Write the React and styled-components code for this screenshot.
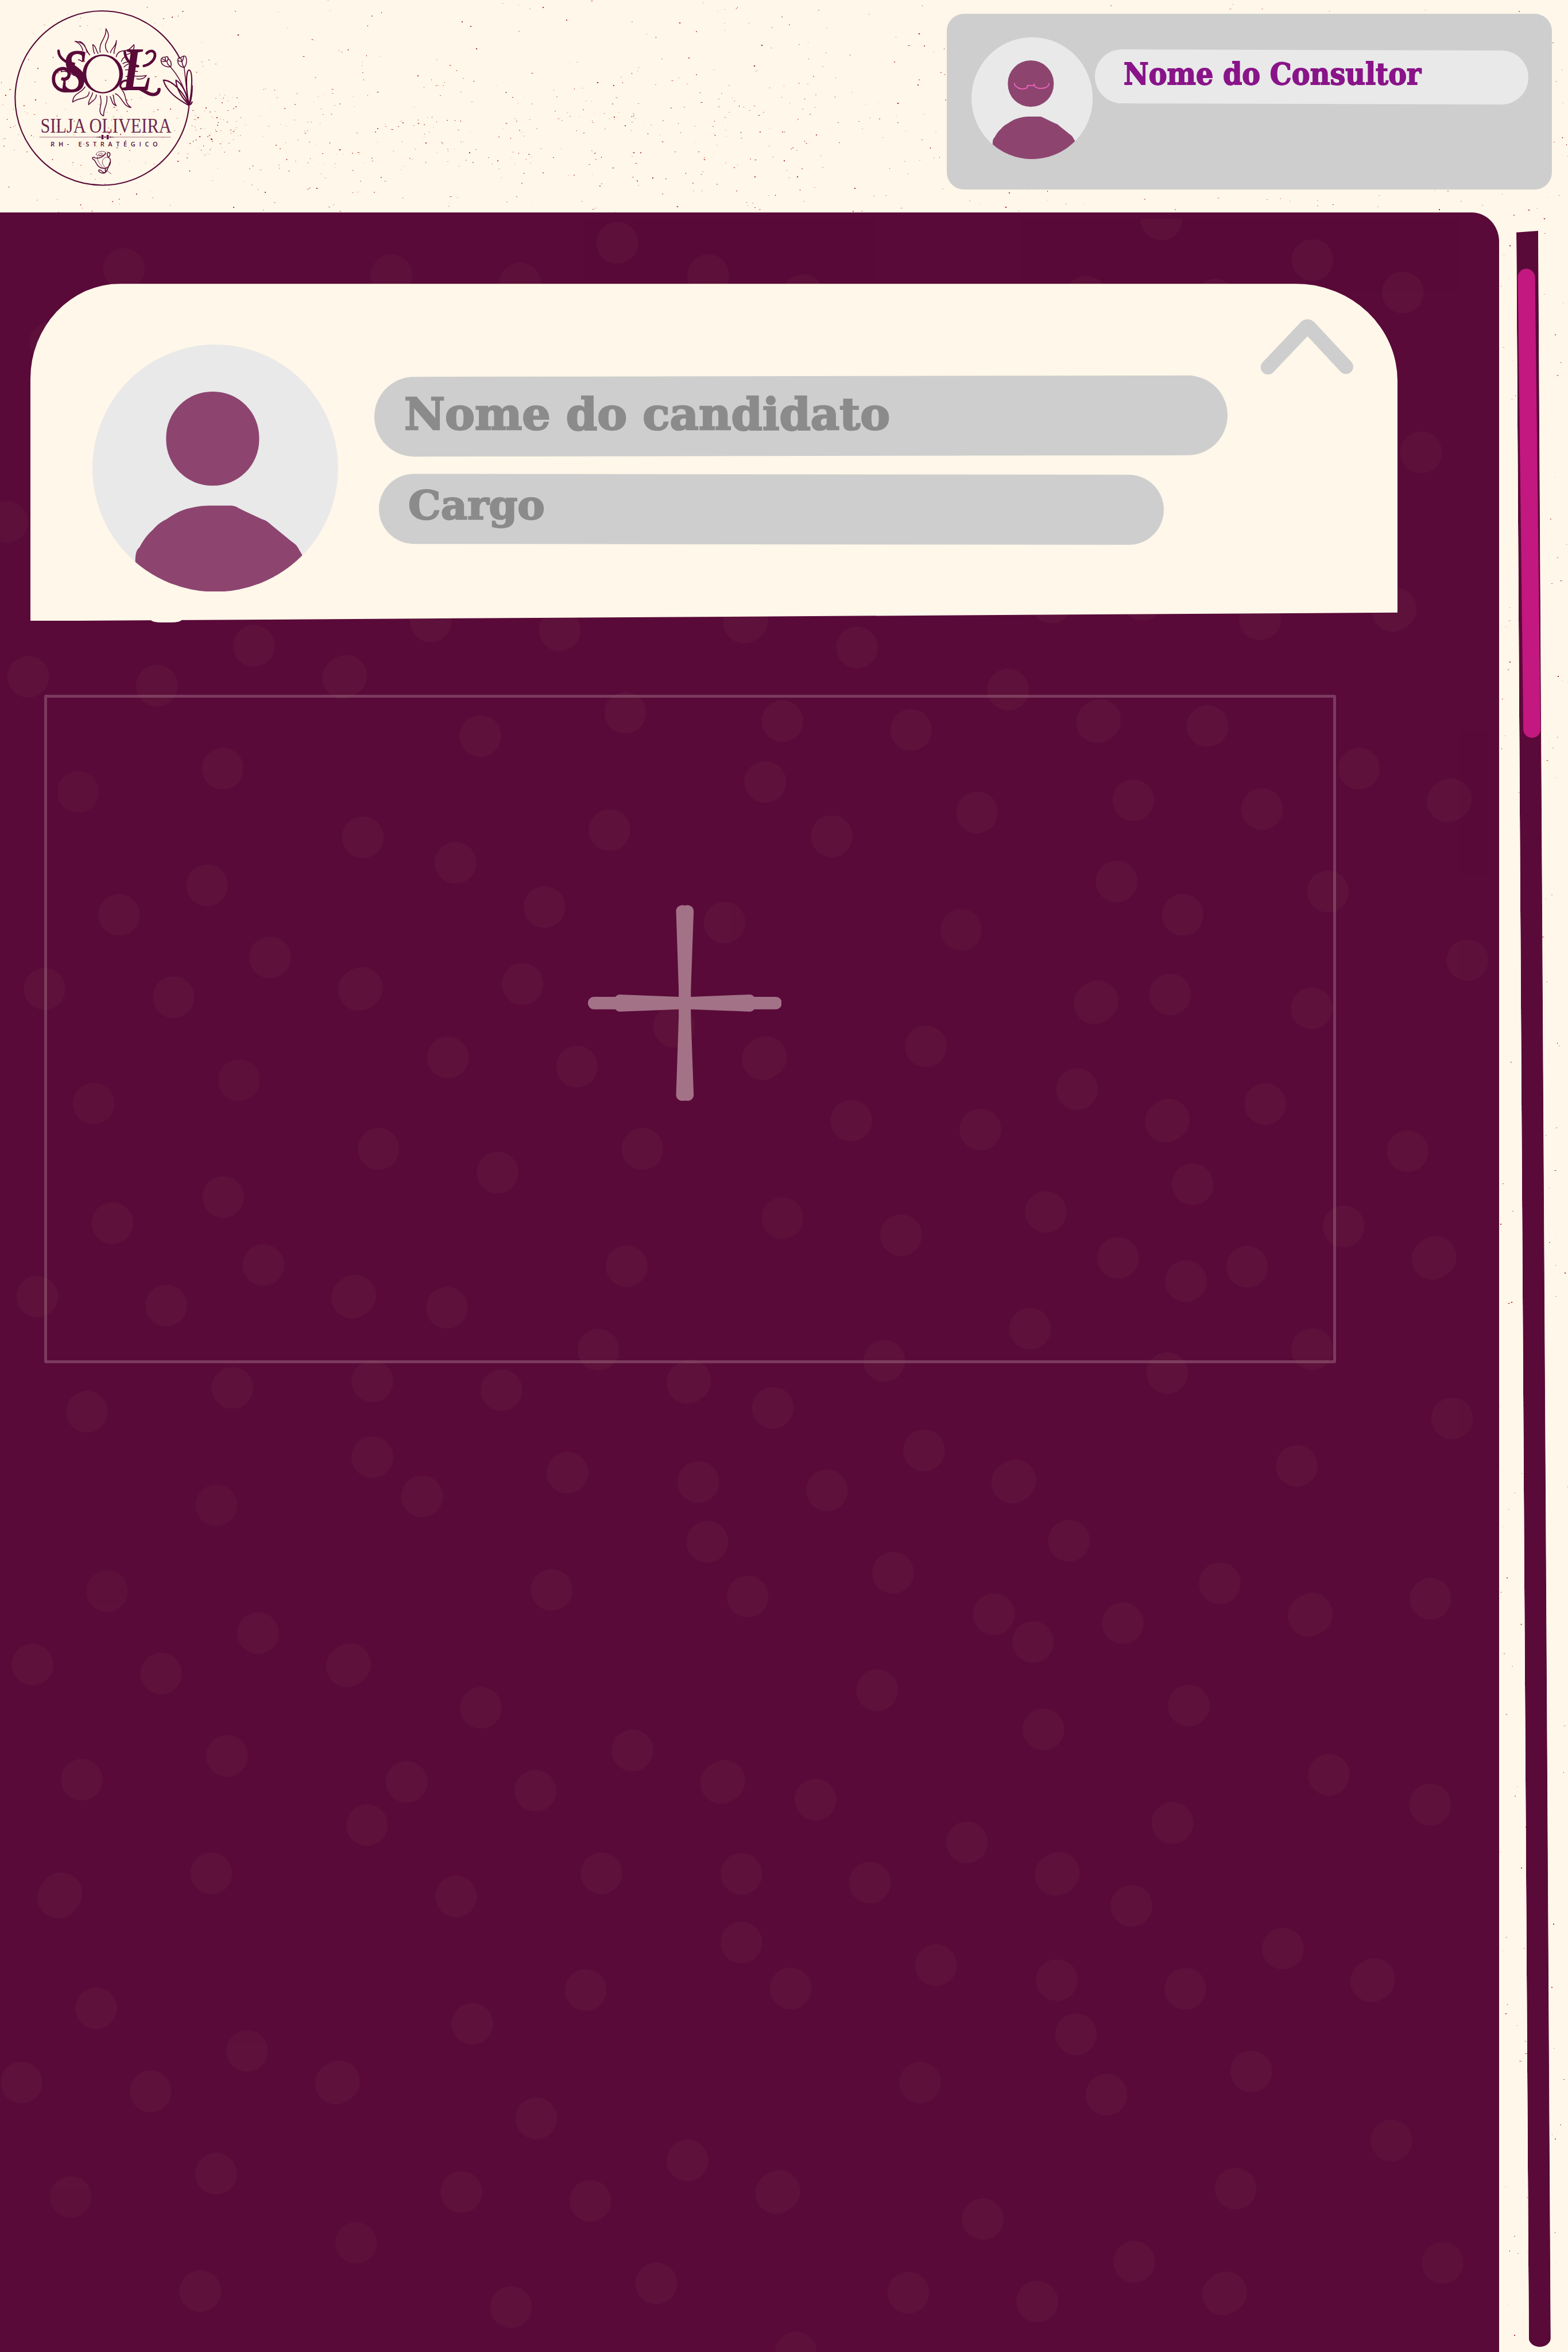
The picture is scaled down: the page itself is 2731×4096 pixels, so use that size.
import React from "react";
import styled, { createGlobalStyle } from "styled-components";

/* All measures are given on a 3000px wide artboard and scaled to the 2731px page. */
const K = 2731 / 3000;
const u = (n) => `${+(n * K).toFixed(3)}px`;

const color = {
  cream: "#fff7e9",
  wine: "#590a39",
  mauve: "#8d4570",
  grey: "#cecece",
  light: "#e9e9e9",
  textGrey: "#8b8b8b",
  purple: "#891489",
  pink: "#c3187f",
  plus: "#a37287",
  frame: "#7c3a5f",
};

const Global = createGlobalStyle`
  html, body { margin: 0; padding: 0; background: ${color.cream}; }
  *, *::before, *::after { box-sizing: border-box; }
`;

const Page = styled.div`
  position: relative;
  width: 2731px;
  height: 4096px;
  overflow: hidden;
  background: ${color.cream};
  display: flex;
  flex-direction: column;
`;

const SpeckleLayer = styled.svg`
  position: absolute;
  inset: 0;
  width: ${u(3000)};
  height: ${u(4500)};
`;

const Header = styled.header`
  position: relative;
  flex: none;
  height: ${u(406)};
  display: flex;
  justify-content: space-between;
  align-items: flex-start;
  padding-right: ${u(31)};
`;

const LogoMark = styled.svg`
  width: ${u(400)};
  height: ${u(400)};
`;

const ConsultantCard = styled.section`
  width: ${u(1158)};
  height: ${u(336)};
  margin-top: ${u(26)};
  padding: ${u(45)} ${u(45)} 0 ${u(48)};
  display: flex;
  align-items: flex-start;
  gap: ${u(4)};
  border-radius: ${u(33)};
  background: ${color.grey};
`;

const AvatarSvg = styled.svg`
  flex: none;
  display: block;
  width: ${(p) => u(p.$w)};
  height: ${(p) => u(p.$h)};
`;

const Pill = styled.div`
  width: ${(p) => u(p.$w)};
  height: ${(p) => u(p.$h)};
  margin: ${(p) => u(p.$top || 0)} 0 0 ${(p) => u(p.$left || 0)};
  padding: ${(p) => u(p.$padTop)} 0 0 ${(p) => u(p.$padLeft)};
  border-radius: ${(p) => u(p.$h / 2)};
  background: ${(p) => p.$bg};
  transform: rotate(${(p) => p.$tilt}deg);
`;

const Label = styled.span`
  display: block;
  width: max-content;
  font-family: "DejaVu Serif", serif;
  font-weight: 700;
  font-size: ${(p) => u(p.$size)};
  line-height: 1;
  white-space: nowrap;
  color: ${(p) => p.$color};
  -webkit-text-stroke: ${(p) => u(p.$size * 0.034)} ${(p) => p.$color};
  transform: rotate(${(p) => -p.$tilt}deg) scaleX(${(p) => p.$stretch});
  transform-origin: left center;
`;

const Body = styled.div`
  position: relative;
  flex: 1;
  min-height: 0;
  display: flex;
`;

const Board = styled.main`
  position: relative;
  flex: none;
  width: ${u(2868)};
  height: ${u(4094)};
  overflow: hidden;
  background: ${color.wine};
  border-top-right-radius: ${u(52)} ${u(56)};
  padding: ${u(137)} 0 0 ${u(58)};
  display: flex;
  flex-direction: column;
  align-items: flex-start;
`;

const DotLayer = styled.svg`
  position: absolute;
  left: 0;
  top: 0;
  z-index: 1;
  width: ${u(2868)};
  height: ${u(4094)};
`;

const ProfileWrap = styled.div`
  position: relative;
  z-index: 2;
  &::after {
    content: "";
    position: absolute;
    left: ${u(231)};
    bottom: ${u(-3)};
    width: ${u(58)};
    height: ${u(10)};
    border-radius: 0 0 ${u(20)} ${u(20)} / 0 0 ${u(5)} ${u(5)};
    background: ${color.cream};
  }
`;

const ProfileCard = styled.section`
  width: ${u(2616)};
  height: ${u(645)};
  padding: ${u(116)} ${u(84)} 0 ${u(119)};
  display: flex;
  align-items: flex-start;
  background: ${color.cream};
  border-radius: ${u(172)} ${u(195)} 0 0 / ${u(182)} ${u(186)} 0 0;
  clip-path: polygon(0 0, 100% 0, 100% 97.5%, 0 100%);
`;

const Fields = styled.div`
  flex: 1;
  display: flex;
  flex-direction: column;
  padding: ${u(60.5)} 0 0 ${u(69)};
`;

const ChevronButton = styled.svg`
  flex: none;
  width: ${u(180)};
  height: ${u(110)};
  margin-top: ${u(-50)};
`;

const DropArea = styled.section`
  width: ${u(2472)};
  height: ${u(1278)};
  margin: ${u(141.5)} 0 0 ${u(26.5)};
  border: 5.5px solid ${color.frame};
  outline: 0.5px solid ${color.frame};
  outline-offset: -5.5px;
  border-radius: ${u(3)};
  padding: ${u(396)} 0 0 ${u(1034.5)};
`;

const PlusIcon = styled.svg`
  display: block;
  width: ${u(371)};
  height: ${u(375)};
`;

const Rail = styled.aside`
  padding: ${u(36)} 0 0 ${u(33)};
`;

const Track = styled.div`
  width: ${u(42)};
  height: ${u(4048)};
  padding: ${u(73)} 0 0 ${u(2.6)};
  background: ${color.wine};
  border-radius: 0 0 ${u(21)} ${u(21)} / 0 0 ${u(17)} ${u(17)};
  clip-path: polygon(0 ${u(3)}, 100% 0, 100% 100%, 0 100%);
  transform: skewX(0.34deg);
  transform-origin: top left;
`;

const Thumb = styled.div`
  width: ${u(33.5)};
  height: ${u(898)};
  border-radius: ${u(17)};
  background: ${color.pink};
  transform: skewX(0.36deg);
  transform-origin: top left;
`;

/* ---------- paper speckles ---------- */

function makeSpeckles() {
  let seed = 90210;
  const rnd = () => {
    seed = (seed * 1664525 + 1013904223) % 4294967296;
    return seed / 4294967296;
  };
  const tones = ["#a81512", "#b8332c", "#c4574d", "#8e1418", "#c97a6f"];
  const out = [];
  const push = (x, y) => {
    const a = rnd();
    out.push({
      x: Math.round(x),
      y: Math.round(y),
      w: a > 0.5 ? 2 : 1,
      h: rnd() > 0.45 ? 2 : 1,
      cross: rnd() > 0.72,
      o: rnd() > 0.55 ? 0.85 : 0.15 + rnd() * 0.5,
      c: tones[Math.floor(rnd() * tones.length)],
    });
  };
  let left = 960;
  while (left > 0) {
    const x = rnd() * 2731;
    const y = rnd() * 372;
    const band = Math.exp(-Math.pow((y - 225) / 95, 2));
    const side = x < 1400 ? 1 : 0.6;
    if (rnd() < (0.22 + 0.78 * band) * side) {
      push(x, y);
      left -= 1;
    }
  }
  for (let i = 0; i < 60; i += 1) push(330 + rnd() * 90, 160 + rnd() * 110);
  for (let i = 0; i < 170; i += 1) push(2611 + rnd() * 120, 372 + rnd() * 3720);
  return out;
}

const SPECKLES = makeSpeckles();

const Speckles = () => (
  <SpeckleLayer viewBox={`0 0 ${3000 * K} ${4500 * K}`} shapeRendering="crispEdges">
    {SPECKLES.map((s, i) => (
      <g key={i} fill={s.c} opacity={s.o}>
        <rect x={s.x} y={s.y} width={s.w} height={s.h} />
        {s.cross && <rect x={s.x - 1} y={s.y} width={s.w + 2} height="1" opacity="0.5" />}
      </g>
    ))}
  </SpeckleLayer>
);

/* ---------- board dots: [x, y, wide?] in tile units ---------- */

const TILES = [
  {
    x: 0, y: 774,
    dots: [
      [59, 108], [328, 124], [531, 52], [721, 108, 1], [901, 8], [1171, 24], [1560, 8, 1], [1308, 173], [1005, 215],
      [466, 274], [163, 316], [759, 398], [953, 444], [1275, 385], [433, 485], [249, 538], [1139, 524], [1516, 552],
      [565, 615], [93, 672], [363, 687], [754, 672, 1], [1093, 663], [1410, 740], [937, 796], [1207, 812], [500, 837],
      [196, 879], [792, 961], [1041, 1004], [1344, 961], [467, 1048], [235, 1095], [551, 1171], [1311, 1173],
      [78, 1228], [348, 1244], [740, 1228, 1], [935, 1248], [1252, 1324], [486, 1393], [779, 1381], [1049, 1397],
      [1441, 1382, 1], [182, 1436], [779, 1518], [1187, 1546],
    ],
  },
  {
    x: 1434, y: 774,
    dots: [
      [225, 55], [541, 131], [632, -26], [822, -31], [1068, 4], [1349, -13, 1], [69, 188], [338, 204], [730, 188, 1], [958, 197],
      [33, 298], [172, 396], [476, 353], [803, 331], [1072, 347], [1275, 274], [1464, 331, 1], [768, 478], [906, 538],
      [1210, 496], [443, 565], [1502, 620], [725, 696, 1], [880, 682], [1176, 707], [369, 776], [31, 797, 1],
      [685, 853], [874, 910, 1], [1079, 880], [213, 910], [483, 926], [1377, 965], [927, 1025], [69, 1086],
      [620, 1075], [317, 1117], [1243, 1101], [771, 1158], [1432, 1158, 1], [1041, 1174], [913, 1200], [587, 1286],
      [282, 1344], [1177, 1323], [874, 1366], [49, 1429], [1470, 1448], [365, 1506], [1145, 1534],
    ],
  },
  {
    x: 0, y: 2434,
    dots: [
      [453, 37], [883, 21], [1461, -5], [1480, 103], [224, 192], [1154, 190], [1564, 202], [540, 268], [68, 325],
      [337, 341], [729, 326, 1], [1006, 403], [1323, 480], [171, 533], [475, 490], [851, 537], [1120, 553],
      [1512, 537, 1], [768, 615], [125, 742, 2], [442, 702], [1258, 702], [954, 744], [1551, 703], [1551, 827],
      [1225, 913], [988, 974], [201, 946], [517, 1023], [45, 1080], [315, 1096], [706, 1080, 1], [1122, 1145],
      [1438, 1221], [452, 1245], [148, 1287], [965, 1278], [1235, 1294], [745, 1370], [1373, 1443], [419, 1457],
      [1069, 1486],
    ],
  },
  {
    x: 1434, y: 2434,
    dots: [
      [162, 10], [553, -6, 1], [668, 101], [300, 159], [511, 234], [593, 284], [781, 250], [984, 178], [1173, 235, 1],
      [1425, 206], [267, 371], [615, 442], [919, 399], [1212, 524], [1424, 578], [138, 569], [455, 646], [885, 611],
      [252, 719], [644, 703, 1], [799, 761], [1116, 838], [390, 868], [643, 895], [86, 910], [912, 911],
      [1304, 895, 1], [683, 993], [747, 1102], [357, 1080], [1050, 1060], [1343, 1185], [59, 1278, 1], [1017, 1272],
      [488, 1327], [805, 1404], [994, 1461, 1], [1450, 1406], [332, 1460], [602, 1476], [97, 1568],
    ],
  },
];

const TOP_DOTS = [
  [237, 108], [749, 120], [995, 136], [1181, 58], [1355, 120], [1536, 158], [2222, 13], [2511, 91], [2684, 153],
  [2325, 167], [2078, 161], [96, 249], [14, 592], [2719, 459],
];

const DOTS = [
  ...TOP_DOTS.map(([x, y]) => ({ x, y, wide: 0 })),
  ...TILES.flatMap((t) =>
    t.dots.map(([x, y, wide]) => ({ x: t.x + x * 0.91454, y: t.y + y * 1.05867, wide: wide || 0 }))
  ),
];

const BoardDots = () => (
  <DotLayer viewBox="0 0 2868 4094">
    <clipPath id="board-area">
      <rect x="0" y="12" width="2868" height="4082" />
    </clipPath>
    <g fill="#ab7f59" opacity="0.06" clipPath="url(#board-area)">
      {DOTS.map((d, i) =>
        d.wide ? (
          <g key={i}>
            <circle cx={d.x - 3} cy={d.y + 2 * d.wide} r="40" />
            <circle cx={d.x + 3} cy={d.y - 2 * d.wide} r="40" />
          </g>
        ) : (
          <circle key={i} cx={d.x} cy={d.y} r="40" />
        )
      )}
    </g>
  </DotLayer>
);

/* ---------- avatar ---------- */

const Avatar = ({ w, h, id, glasses }) => (
  <AvatarSvg $w={w} $h={h} viewBox="0 0 470 473" preserveAspectRatio="none">
    <clipPath id={id}>
      <ellipse cx="235" cy="236.5" rx="235" ry="236.5" />
    </clipPath>
    <ellipse cx="235" cy="236.5" rx="235" ry="236.5" fill={color.light} />
    <rect x="141" y="90" width="178" height="180" rx="88" fill={color.mauve} />
    <path
      clipPath={`url(#${id})`}
      fill={color.mauve}
      d="M82 473V416C82 400 84 393 90 388C100 370 106 363 116 354C124 345 130 340 142 334C158 323 168 318 182 314C200 309 212 308 231 308H262C270 308 274 309 280 313C296 321 310 327 324 334C331 336 336 339 342 345L380 376C387 381 391 384 394 390L401 402V473Z"
    />
    {glasses && (
      <path
        d="M166 177C167 186 171 191 178 194C187 202 199 201 209 199C217 196 218 192 217 187H244C245 193 251 196 263 198C280 199 300 195 301 178M243 188V179"
        fill="none"
        stroke="#ee62bd"
        strokeWidth="4"
      />
    )}
  </AvatarSvg>
);

/* ---------- logo ---------- */

const Logo = () => (
  <LogoMark viewBox="0 0 1200 1200">
    <g fill="none" stroke={color.wine} strokeWidth="5" strokeLinecap="round" strokeLinejoin="round">
      <path strokeWidth="7" d="M1084.7 610A500 500 0 1 1 1031 333" />
      <path d="M575 300C563 240 612 225 608 165C642 215 605 235 605 260C605 280 612 292 620 300" />
      <path d="M543 308C530 285 538 275 532 256C552 262 548 285 563 307" />
      <path d="M634 302C640 275 668 265 668 232C670 262 655 275 654 307" />
      <path d="M667 326C672 300 690 292 715 291C745 288 755 270 769 256C775 285 750 310 728 312" />
      <path d="M515 315C490 290 495 240 430 237C462 250 470 270 476 290M456 238C485 245 492 275 500 300" />
      <path d="M697 352C702 338 708 332 715 327M705 365C715 358 725 355 735 356M712 385C730 360 755 370 775 347" />
      <path d="M720 401C750 398 765 411 790 410M724 439C765 430 785 445 840 433C828 452 805 456 785 452" />
      <path d="M440 437C400 430 395 400 350 412C356 396 366 392 378 394M450 343C460 344 466 348 472 354M458 484C466 486 470 485 474 483" />
      <path d="M488 498C465 540 420 530 417 586C455 558 508 572 512 528" />
      <path d="M532 532C528 560 505 570 509 601C528 578 552 575 553 545" />
      <path d="M575 550C590 600 570 610 574 640C576 655 585 662 595 665C592 620 622 600 613 552" />
      <path d="M632 555C645 575 640 600 668 607C650 590 657 565 649 545" />
      <path d="M662 538C700 550 705 612 752 617C712 592 728 550 703 520" />
      <path d="M925 352C920 338 932 325 948 329C955 321 966 325 965 336C980 347 985 365 981 382C958 388 928 377 925 352ZM926 350C940 358 945 350 958 352M932 338L958 352C965 345 966 340 964 333M958 352C960 365 966 376 980 382M948 329L950 346" />
      <path d="M1021 345C1020 335 1028 328 1037 333C1045 320 1062 318 1067 327C1074 345 1072 372 1058 387C1035 385 1018 368 1021 345ZM1022 347C1032 354 1038 350 1045 354M1037 333C1042 342 1044 348 1045 354C1050 340 1056 330 1054 323M1045 354C1046 368 1050 380 1058 387" />
      <path d="M978 384C1020 430 1060 500 1084 600M1057 389C1066 450 1070 530 1084 600" />
      <path strokeWidth="7" d="M1084 605C1020 570 955 525 938 460C990 458 1062 540 1084 605ZM1084 600C1040 560 1010 500 1010 460C1042 478 1072 530 1084 600ZM1085 600C1066 520 1066 402 1085 402C1108 405 1104 525 1085 600ZM1103 492C1104 530 1098 570 1087 602C1095 600 1100 592 1103 585" />
    </g>
    <path
      fill={color.wine}
      fillRule="evenodd"
      d="M474 424A116 112 0 1 0 706 424A116 112 0 1 0 474 424ZM495 425A95 104 0 1 0 685 425A95 104 0 1 0 495 425Z"
    />
    <g fill={color.wine} fontFamily='"Liberation Serif", serif' fontStyle="italic" fontWeight="700" fontSize="355">
      <text x="352" y="526" textLength="150" lengthAdjust="spacingAndGlyphs">S</text>
      <text x="698" y="518" textLength="175" lengthAdjust="spacingAndGlyphs">L</text>
    </g>
    {/* flourishes round the initials */}
    <g fill="none" stroke={color.wine} strokeLinecap="round">
      <path strokeWidth="19" d="M360 453C392 462 408 425 388 404C362 378 308 400 307 452C306 500 345 528 392 520" />
      <path strokeWidth="15" d="M336 292C336 330 376 362 424 366" />
      <path strokeWidth="15" d="M716 296C718 340 752 378 792 380" />
      <path strokeWidth="15" d="M826 378C868 370 896 334 888 306C880 286 856 290 842 306" />
      <path strokeWidth="19" d="M800 508C834 524 856 546 888 542C904 538 912 528 913 514" />
      <path strokeWidth="11" d="M690 496C694 462 724 452 752 474M692 498C700 518 730 518 752 504" />
    </g>
    <g fill={color.wine} fontFamily='"Liberation Serif", serif' opacity="0.88">
      <text x="232" y="760" fontSize="119" textLength="752" lengthAdjust="spacingAndGlyphs">SILJA OLIVEIRA</text>
    </g>
    <path d="M226 787H980" stroke={color.wine} strokeWidth="2.5" opacity="0.75" />
    <g fill={color.wine}>
      <circle cx="588" cy="781" r="7" />
      <circle cx="588" cy="793" r="7" />
      <circle cx="618" cy="781" r="7" />
      <circle cx="618" cy="793" r="7" />
      <circle cx="603" cy="787" r="4" />
      <circle cx="573" cy="787" r="4" />
      <circle cx="633" cy="787" r="4" />
      <circle cx="563" cy="787" r="3" />
      <circle cx="643" cy="787" r="3" />
      <circle cx="554" cy="787" r="2" />
      <circle cx="652" cy="787" r="2" />
    </g>
    <text x="291" y="842" fontFamily='"Open Sans", sans-serif' fontWeight="600" fontSize="36" fill={color.wine} textLength="614" lengthAdjust="spacing">
      RH- ESTRATÉGICO
    </text>
    <g fill="none" stroke={color.wine} strokeWidth="3.5" strokeLinecap="round">
      <path strokeWidth="2.5" d="M552 886C552 866 604 862 607 878C607 894 556 902 552 886ZM565 888C568 876 592 876 586 886C580 894 566 892 565 888" />
      <path strokeWidth="2.5" d="M558 900C560 935 580 955 638 998M622 900C580 905 575 940 612 968" />
      <path strokeWidth="5" d="M606 880C590 905 560 912 545 906C535 898 526 905 534 914C552 918 550 960 590 966C625 968 640 940 632 912C610 895 612 874 624 875C638 880 630 900 620 904" />
      <path strokeWidth="5" d="M632 930C620 960 615 990 598 994C580 996 562 985 567 976C580 968 590 998 604 990C608 980 600 972 606 966" />
    </g>
  </LogoMark>
);

const Chevron = () => (
  <ChevronButton viewBox="2410 609 180 110">
    <path d="M2426 703L2499 626Q2502 624 2505 627L2575 702" fill="none" stroke={color.grey} strokeWidth="28" strokeLinecap="round" strokeLinejoin="round" />
  </ChevronButton>
);

const Plus = () => (
  <PlusIcon viewBox="135 155 1113 1125">
    <path
      fill={color.plus}
      d="M641 190C641 165 668 150 691 158C716 150 742 165 742 190L726 640V682L1062 669Q1078 668 1089 682H1213A35 36 0 0 1 1213 754H1089Q1078 768 1062 767L726 754V800L742 1246C742 1270 716 1286 691 1277C668 1286 641 1270 641 1246L656 800V754L320 767Q304 768 293 754H170A35 36 0 0 1 170 682H293Q304 668 320 669L656 682V640Z"
    />
  </PlusIcon>
);

export default function App() {
  return (
    <>
      <Global />
      <Page>
        <Speckles />
        <Header>
          <Logo />
          <ConsultantCard>
            <Avatar w={232} h={233} id="consultant-clip" glasses />
            <Pill $w={829} $h={103} $top={25} $padTop={19.5} $padLeft={55} $bg={color.light} $tilt={0.17}>
              <Label $size={56.7} $color={color.purple} $stretch={0.925} $tilt={0.17}>
                Nome do Consultor
              </Label>
            </Pill>
          </ConsultantCard>
        </Header>
        <Body>
          <Board>
            <ProfileWrap>
              <ProfileCard>
                <Avatar w={470} h={473} id="candidate-clip" />
                <Fields>
                  <Pill $w={1632} $h={152.5} $padTop={30} $padLeft={57} $bg={color.grey} $tilt={-0.1}>
                    <Label $size={83.7} $color={color.textGrey} $stretch={1.021} $tilt={-0.1}>
                      Nome do candidato
                    </Label>
                  </Pill>
                  <Pill $w={1502} $h={134} $top={35} $left={9} $padTop={22} $padLeft={56.5} $bg={color.grey} $tilt={0.07}>
                    <Label $size={76} $color={color.textGrey} $stretch={1.03} $tilt={0.07}>
                      Cargo
                    </Label>
                  </Pill>
                </Fields>
                <Chevron />
              </ProfileCard>
            </ProfileWrap>
            <DropArea>
              <Plus />
            </DropArea>
            <BoardDots />
          </Board>
          <Rail>
            <Track>
              <Thumb />
            </Track>
          </Rail>
        </Body>
      </Page>
    </>
  );
}
